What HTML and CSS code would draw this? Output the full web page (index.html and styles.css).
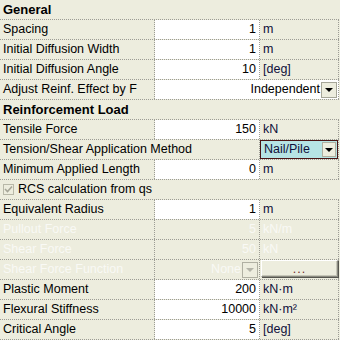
FILE: index.html
```html
<!DOCTYPE html>
<html lang="en">
<head>
    <meta charset="UTF-8">
    <meta name="viewport" content="width=device-width, initial-scale=1.0">
    <title>Properties</title>
    <link rel="stylesheet" href="styles.css">
</head>
<body>
    <div class="grid">
        <div class="row head">General</div>
        <div class="row">
            <div class="label">Spacing</div>
            <div class="val">1</div>
            <div class="unit">m</div>
        </div>
        <div class="row">
            <div class="label">Initial Diffusion Width</div>
            <div class="val">1</div>
            <div class="unit">m</div>
        </div>
        <div class="row">
            <div class="label">Initial Diffusion Angle</div>
            <div class="val">10</div>
            <div class="unit">[deg]</div>
        </div>
        <div class="row">
            <div class="label">Adjust Reinf. Effect by F</div>
            <div class="combo wide">
                <span class="combo-text">Independent</span>
                <span class="drop"><span class="arrow"></span></span>
            </div>
        </div>
        <div class="row head">Reinforcement Load</div>
        <div class="row">
            <div class="label">Tensile Force</div>
            <div class="val">150</div>
            <div class="unit">kN</div>
        </div>
        <div class="row">
            <div class="label span">Tension/Shear Application Method</div>
            <div class="unit">
                <div class="select">
                    <span class="select-text">Nail/Pile</span>
                    <span class="drop"><span class="arrow"></span></span>
                </div>
            </div>
        </div>
        <div class="row">
            <div class="label">Minimum Applied Length</div>
            <div class="val">0</div>
            <div class="unit">m</div>
        </div>
        <div class="row check-row">
            <span class="check">
                <svg width="9" height="9" viewBox="0 0 9 9"><path d="M1 4 L3.5 6.5 L8 1.5" fill="none" stroke="#a5a597" stroke-width="1.6"/></svg>
            </span>
            RCS calculation from qs
        </div>
        <div class="row">
            <div class="label">Equivalent Radius</div>
            <div class="val">1</div>
            <div class="unit">m</div>
        </div>
        <div class="row off">
            <div class="label">Pullout Force</div>
            <div class="val">5</div>
            <div class="unit">kN/m</div>
        </div>
        <div class="row off">
            <div class="label">Shear Force</div>
            <div class="val">50</div>
            <div class="unit">kN</div>
        </div>
        <div class="row off">
            <div class="label">Shear Force Function</div>
            <div class="val combo">
                <span class="combo-text">None</span>
                <span class="drop"><span class="arrow"></span></span>
            </div>
            <div class="unit">
                <span class="btn">...</span>
            </div>
        </div>
        <div class="row">
            <div class="label">Plastic Moment</div>
            <div class="val">200</div>
            <div class="unit">kN·m</div>
        </div>
        <div class="row">
            <div class="label">Flexural Stiffness</div>
            <div class="val">10000</div>
            <div class="unit">kN·m²</div>
        </div>
        <div class="row">
            <div class="label">Critical Angle</div>
            <div class="val">5</div>
            <div class="unit">[deg]</div>
        </div>
    </div>
</body>
</html>
```

FILE: styles.css
```css
body {
    margin: 0;
    background-color: #ededde;
    font-family: "Liberation Sans", Arial, sans-serif;
    font-size: 12.5px;
    color: #000;
}

.grid {
    width: 339px;
}

.row {
    display: grid;
    grid-template-columns: 155px 105px 79px;
    height: 20px;
    line-height: 19px;
    border-bottom: 1px dotted #9c9c94;
    box-sizing: border-box;
}

.row.head {
    display: block;
    font-weight: bold;
    font-size: 13px;
    padding-left: 3px;
}

.label {
    padding-left: 3px;
    border-right: 1px dotted #9c9c94;
    white-space: nowrap;
    overflow: hidden;
}

.label.span {
    grid-column: 1 / 3;
    border-right: 1px dotted #9c9c94;
}

.val {
    background-color: #fff;
    text-align: right;
    padding-right: 3px;
    border-right: 1px dotted #9c9c94;
}

.unit {
    padding-left: 3px;
    border-right: 1px dotted #9c9c94;
    color: #10103a;
}

/* combo boxes */
.combo {
    display: flex;
    align-items: center;
    justify-content: flex-end;
    background-color: #fff;
    border-right: 1px dotted #9c9c94;
}

.combo.wide {
    grid-column: 2 / 4;
    padding-right: 1px;
}

.combo-text {
    padding-right: 1px;
}

.drop {
    display: flex;
    align-items: center;
    justify-content: center;
    width: 14px;
    height: 14px;
    border: 1px solid #a6a698;
    background-color: #ededde;
}

.arrow {
    width: 0;
    height: 0;
    border-left: 4px solid transparent;
    border-right: 4px solid transparent;
    border-top: 4px solid #000;
    margin-top: 1px;
}

.select {
    display: flex;
    align-items: center;
    justify-content: space-between;
    height: 19px;
    margin-left: -3px;
    box-sizing: border-box;
    border: 1px solid #4a1414;
    background-color: #b6e4e4;
    padding: 0 1px 0 3px;
    color: #10103a;
}

.select .drop {
    width: 12px;
    height: 13px;
    border-color: #b0b0a0;
}

/* checkbox row */
.check-row {
    display: flex;
    align-items: center;
    padding-left: 3px;
}

.check {
    display: flex;
    align-items: center;
    justify-content: center;
    width: 11px;
    height: 11px;
    border: 1px solid #b8b8a8;
    margin-right: 4px;
    box-sizing: border-box;
}

/* disabled rows */
.row.off {
    color: #f9f9f5;
}

.row.off .val {
    background-color: transparent;
}

.row.off .unit {
    color: #f9f9f5;
}

.row.off .val.combo {
    padding-right: 1px;
}

.row.off .combo-text {
    padding-right: 1px;
}

.row.off .drop {
    border-color: #b0b0a2;
}

.row.off .arrow {
    border-top-color: #b4b4a8;
}

.btn {
    display: flex;
    align-items: center;
    justify-content: center;
    height: 17px;
    margin: 0 0 0 -2px;
    box-sizing: border-box;
    border: 1px solid #fff;
    border-right-color: #8a8a80;
    border-bottom-color: #8a8a80;
    box-shadow: 1px 1px 0 #55554e, inset -1px -1px 0 #c6c6b8;
    color: #702828;
    letter-spacing: 1px;
    line-height: 10px;
}
```
